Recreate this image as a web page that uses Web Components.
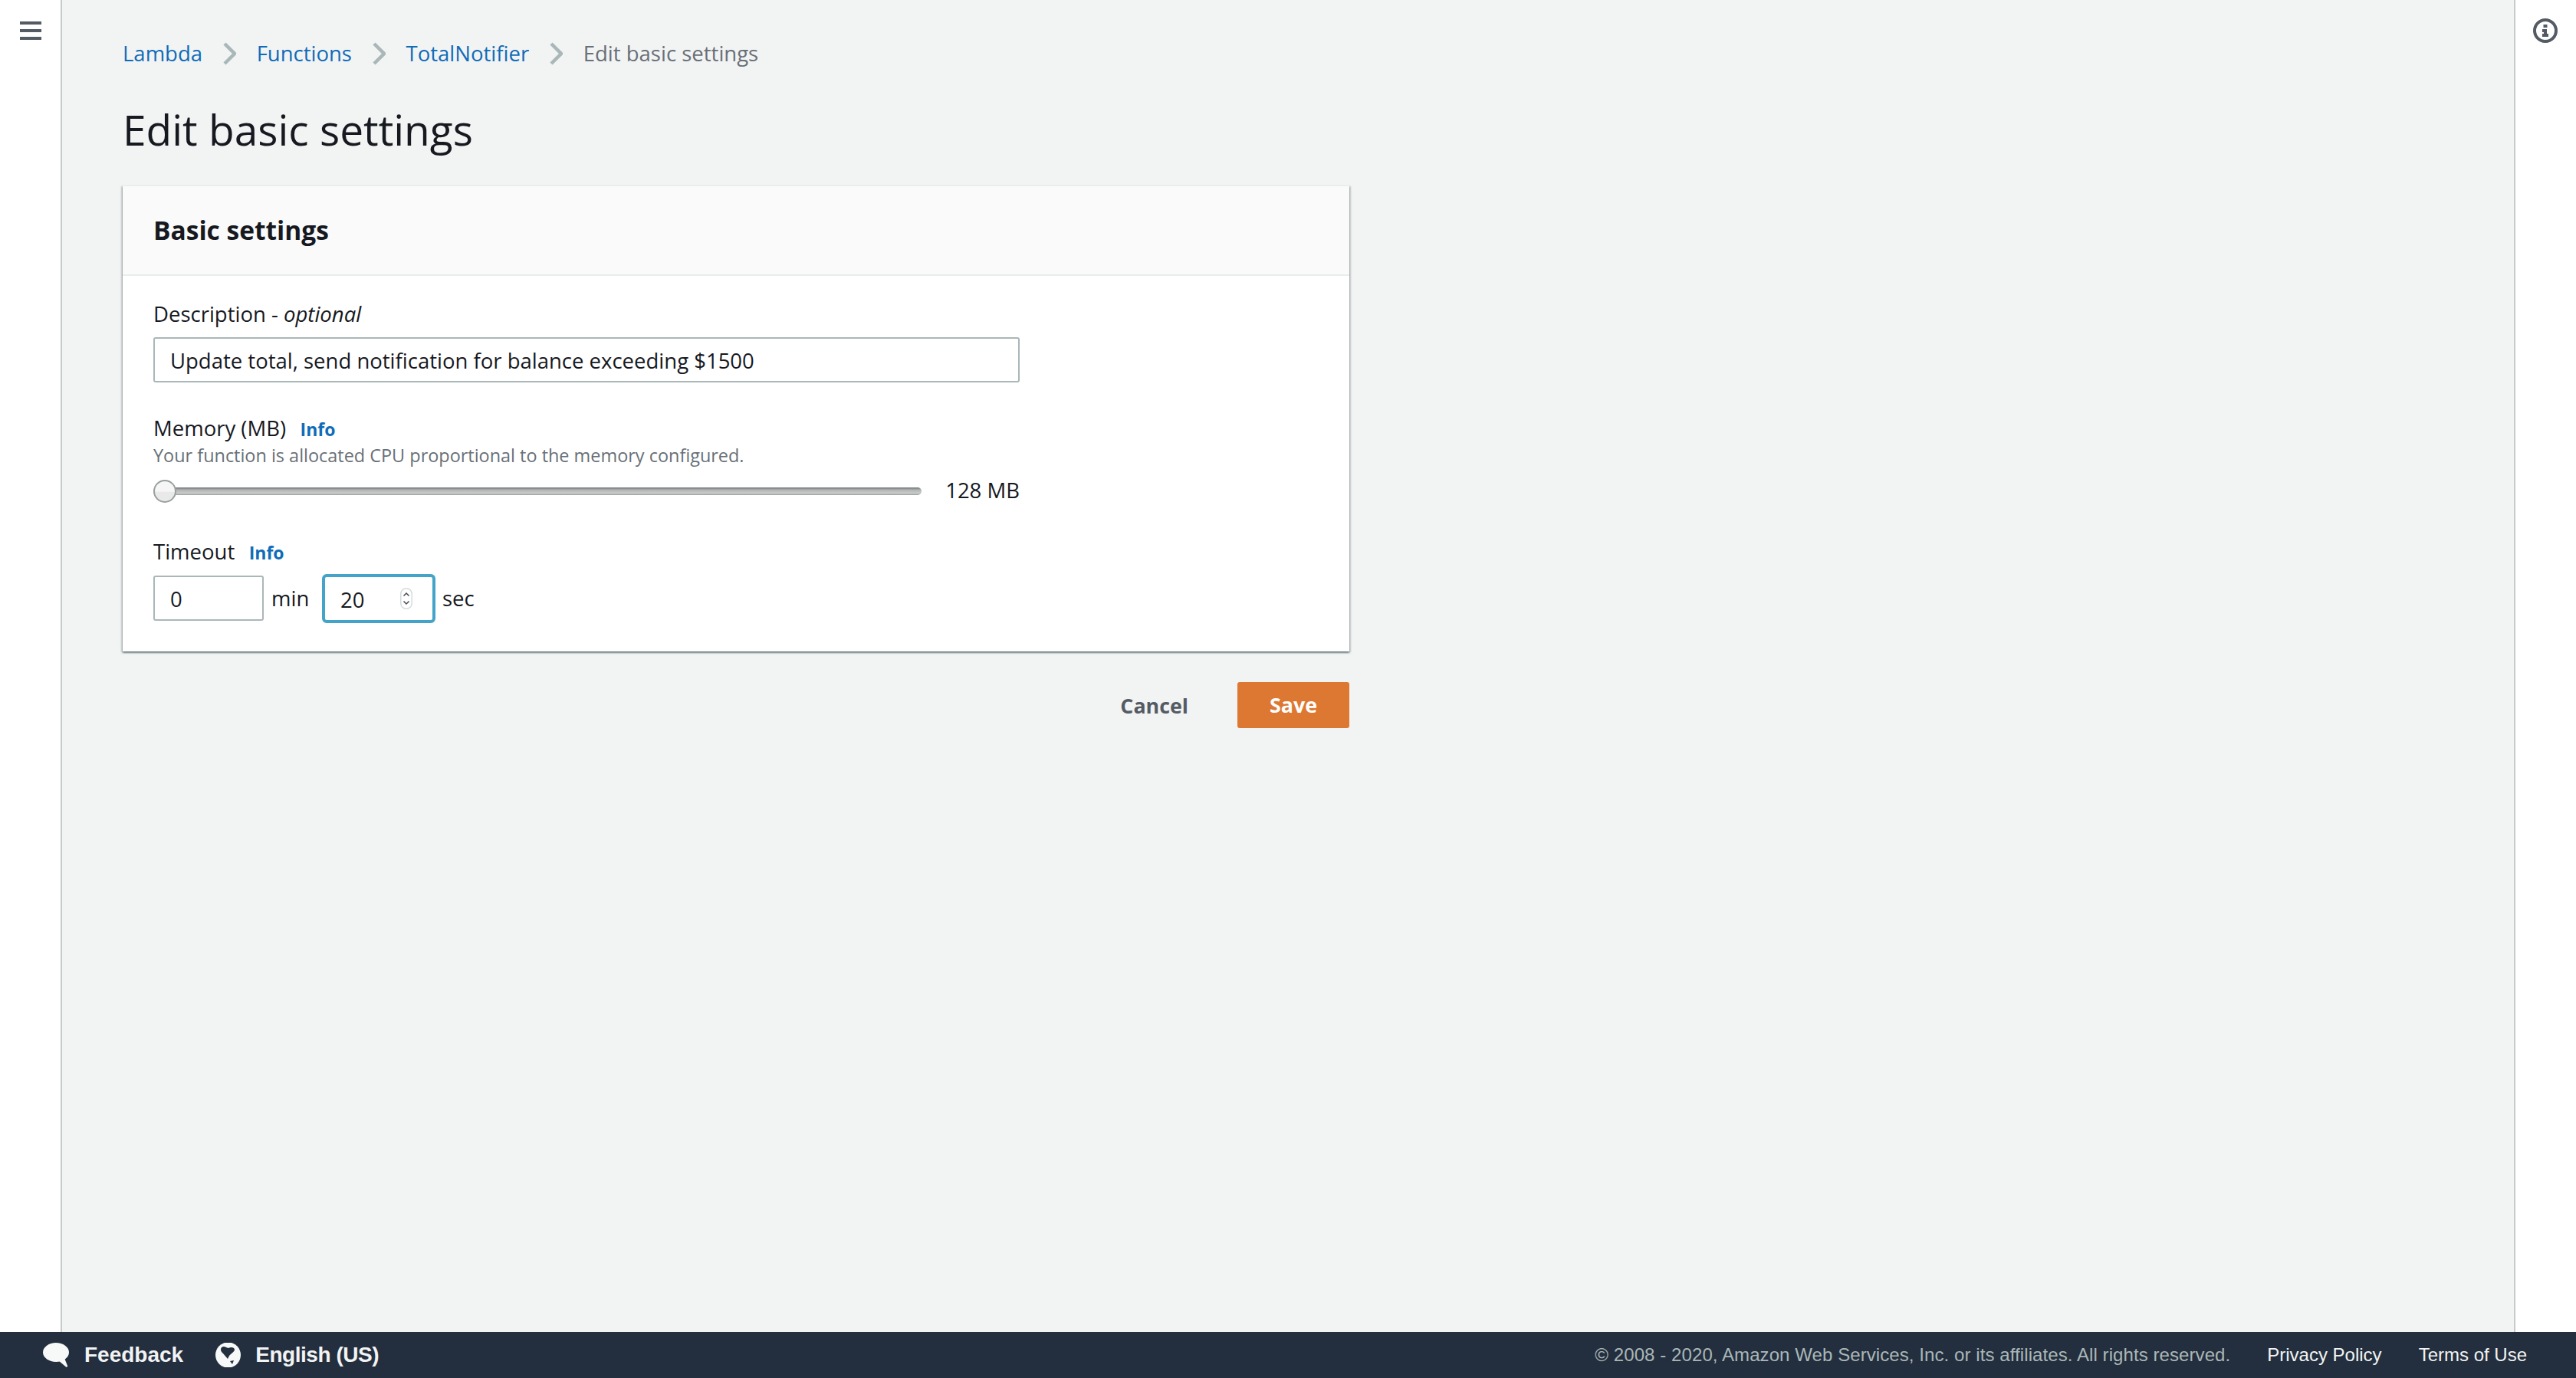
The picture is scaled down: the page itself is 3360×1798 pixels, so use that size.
<!doctype html>
<html>
<head>
<meta charset="utf-8">
<title>Edit basic settings</title>
<style>
  html, body { margin: 0; height: 100%; }
  body { font-family: "Open Sans", "Liberation Sans", sans-serif; color: #16191f; }
</style>
</head>
<body>
<aws-shell>
  <aws-breadcrumbs>
    <a>Lambda</a><a>Functions</a><a>TotalNotifier</a><span>Edit basic settings</span>
  </aws-breadcrumbs>
  <aws-title>Edit basic settings</aws-title>
  <aws-card heading="Basic settings">
    <aws-field>
      <span slot="label">Description - <i>optional</i></span>
      <aws-text-box wide value="Update total, send notification for balance exceeding $1500"></aws-text-box>
    </aws-field>
    <aws-field info hint="Your function is allocated CPU proportional to the memory configured.">
      <span slot="label">Memory (MB)</span>
      <aws-slider value="128 MB"></aws-slider>
    </aws-field>
    <aws-field info last>
      <span slot="label">Timeout</span>
      <aws-time-input></aws-time-input>
    </aws-field>
  </aws-card>
  <aws-actions></aws-actions>
</aws-shell>
<script>
// small helper, every element below is just a template plus a shadow root
function shadowOf(el, html) {
  const root = el.attachShadow({ mode: 'open' })
  root.innerHTML = html
  return root
}

class AwsShell extends HTMLElement {
  constructor() {
    super()
    shadowOf(this, `
      <style>
        :host { display: grid; grid-template-columns: 81px 1fr 81px; grid-template-rows: 1738px 60px; height: 1798px; background: #fff; overflow: hidden; }
        .rail { background: #fff; position: relative; z-index: 1; }
        .rail.left { border-right: 2px solid #c6caca; box-sizing: border-box; padding: 28px 0 0 26px; }
        .rail.right { border-left: 2px solid #c6caca; box-sizing: border-box; padding: 24px 0 0 23px; }
        svg { display: block; }
        main { background: #f2f3f3; padding: 0 79px; min-width: 0; }
        footer { grid-column: 1 / -1; background: #232f3e; display: flex; align-items: center; padding: 0 64px 0 56px; font: 24px/60px "Liberation Sans", sans-serif; color: #f2f3f3; }
        .item { display: flex; align-items: center; font-weight: 700; font-size: 28px; margin-right: 42px; }
        .item svg { margin-right: 20px; }
        .item.lang svg { margin-right: 19px; }
        .item.lang { letter-spacing: -.45px; }
        .grow { flex: 1; }
        .copy { color: #aab7b8; letter-spacing: .08px; }
        .link { margin-left: 48px; }
      </style>
      <div class="rail left">
        <svg width="28" height="24" viewBox="0 0 28 24" fill="#545b64"><rect width="28" height="4"/><rect y="10" width="28" height="4"/><rect y="20" width="28" height="4"/></svg>
      </div>
      <main><slot></slot></main>
      <div class="rail right">
        <svg width="32" height="32" viewBox="0 0 32 32"><circle cx="16" cy="16" r="14" fill="none" stroke="#545b64" stroke-width="4"/><rect x="13.5" y="8" width="5" height="4" fill="#545b64"/><path d="M12 14h6v6h2v4h-8v-4h2v-2h-2z" fill="#545b64"/></svg>
      </div>
      <footer>
        <span class="item">
          <svg width="34" height="32" viewBox="0 0 34 32" fill="#f7f8f8"><ellipse cx="17" cy="12.5" rx="17" ry="12.5"/><path d="M20 23l10 8.500c1 .6 2.500 0 2-1.500L28 20z"/></svg>
          Feedback
        </span>
        <span class="item lang">
          <svg width="33" height="32" viewBox="0 0 33 32"><circle cx="16.500" cy="16" r="16.500" fill="#f7f8f8"/><path d="M7 9C7 5 11 4 14 6l3 1c3-2 8-1 8 2 0 3-5 5-7 8l-2 4c-2-2-4-5-6-7-2-2-3-3-3-5zM19 24l5-1-2 5z" fill="#232f3e"/></svg>
          English (US)
        </span>
        <span class="grow"></span>
        <span class="copy">© 2008 - 2020, Amazon Web Services, Inc. or its affiliates. All rights reserved.</span>
        <span class="link">Privacy Policy</span>
        <span class="link">Terms of Use</span>
      </footer>`)
  }
}
customElements.define('aws-shell', AwsShell)

class AwsBreadcrumbs extends HTMLElement {
  constructor() {
    super()
    const root = shadowOf(this, `
      <style>
        :host { display: block; padding-top: 50px; font-size: 27.5px; line-height: 40px; height: 40px; color: #687078; }
        nav { display: flex; align-items: center; }
        a { color: #0f6cb8; }
        svg { display: block; margin: 0 26.8px; }
      </style>
      <nav></nav>`)
    const nav = root.querySelector('nav')
    const items = [...this.children]
    items.forEach((item, i) => {
      const el = document.createElement(item.tagName === 'A' ? 'a' : 'span')
      el.textContent = item.textContent
      nav.appendChild(el)
      if (i < items.length - 1) {
        const sep = document.createElement('template')
        sep.innerHTML = '<svg width="17" height="30" viewBox="0 0 17 30"><path d="M2 2l13 13L2 28" fill="none" stroke="#aab7b8" stroke-width="4.500"/></svg>'
        nav.appendChild(sep.content)
      }
    })
  }
}
customElements.define('aws-breadcrumbs', AwsBreadcrumbs)

class AwsTitle extends HTMLElement {
  constructor() {
    super()
    shadowOf(this, `
      <style>
        :host { display: block; font-size: 55px; line-height: 64px; margin-top: 47px; margin-bottom: 41px; color: #16191f; }
      </style>
      <slot></slot>`)
  }
}
customElements.define('aws-title', AwsTitle)

class AwsCard extends HTMLElement {
  constructor() {
    super()
    const root = shadowOf(this, `
      <style>
        :host { display: block; width: 1600px; background: #fff; box-shadow: 0 2px 2px 0 rgba(0,28,36,.45), 2px 1px 2px 0 rgba(0,28,36,.18), -2px 1px 2px 0 rgba(0,28,36,.18); }
        header { height: 115px; background: #fafafa; border-bottom: 2px solid #eaeded; border-top: 1px solid #eaeded; padding: 0 40px; font-size: 33.5px; font-weight: 700; line-height: 115px; color: #16191f; }
        .body { padding: 30px 40px 40px; }
      </style>
      <header></header>
      <div class="body"><slot></slot></div>`)
    root.querySelector('header').textContent = this.getAttribute('heading')
  }
}
customElements.define('aws-card', AwsCard)

class AwsField extends HTMLElement {
  constructor() {
    super()
    const hint = this.getAttribute('hint')
    shadowOf(this, `
      <style>
        :host { display: block; margin-bottom: 40px; }
        :host([last]) { margin-bottom: 0; }
        .label { display: flex; align-items: baseline; font-size: 27.5px; line-height: 40px; color: #16191f; }
        .info { font-size: 23px; font-weight: 700; color: #0f6cb8; margin-left: 18.5px; }
        .hint { font-size: 23.45px; line-height: 32px; margin-top: -2px; color: #687078; }
        .control { margin-top: 10px; }
        .hint + .control { margin-top: 17px; }
      </style>
      <div class="label"><slot name="label"></slot>${this.hasAttribute('info') ? '<span class="info">Info</span>' : ''}</div>
      ${hint ? `<div class="hint">${hint}</div>` : ''}
      <div class="control"><slot></slot></div>`)
  }
}
customElements.define('aws-field', AwsField)

class AwsTextBox extends HTMLElement {
  constructor() {
    super()
    const root = shadowOf(this, `
      <style>
        :host { display: block; flex: none; box-sizing: border-box; width: 144px; height: 59px; background: #fff; border: 2px solid #aab7b8; border-radius: 3px; padding: 0 20px; font-size: 27.5px; line-height: 58px; color: #16191f; position: relative; }
        :host([wide]) { width: 1130px; margin-top: 1px; }
        :host([focused]) { width: 148px; height: 64px; border: 4px solid #44a3c8; border-radius: 6px; padding: 0 20px; line-height: 59px; }
        svg { position: absolute; right: 26px; top: 14px; }
      </style>
      <span></span>
      ${this.hasAttribute('focused') ? `<svg width="16" height="28" viewBox="0 0 16 28"><rect x=".75" y=".75" width="14.5" height="26.5" rx="7" fill="#fff" stroke="#d5dbdb" stroke-width="1.5"/><path d="M4.5 10.5L8 7l3.5 3.5M4.5 17.5L8 21l3.5-3.5" fill="none" stroke="#444b54" stroke-width="1.5"/></svg>` : ''}`)
    root.querySelector('span').textContent = this.getAttribute('value')
  }
}
customElements.define('aws-text-box', AwsTextBox)

class AwsSlider extends HTMLElement {
  constructor() {
    super()
    const root = shadowOf(this, `
      <style>
        :host { display: flex; align-items: center; width: 1130px; height: 28px; padding-bottom: 5px; font-size: 27.5px; line-height: 28px; color: #16191f; }
        .track { position: relative; width: 1002px; height: 10px; border-radius: 5px; background: linear-gradient(#6f7476, #b4b6b6 35%, #c9cbcb 75%, #9a9d9d); }
        .thumb { position: absolute; left: 0; top: -10px; box-sizing: border-box; width: 30px; height: 30px; border-radius: 50%; background: linear-gradient(#f6f6f6 50%, #e9e9e9 55%); border: 2.5px solid #9a9f9f; }
        .value { margin-left: auto; padding-bottom: 3px; }
      </style>
      <div class="track"><div class="thumb"></div></div>
      <span class="value"></span>`)
    root.querySelector('.value').textContent = this.getAttribute('value')
  }
}
customElements.define('aws-slider', AwsSlider)

class AwsTimeInput extends HTMLElement {
  constructor() {
    super()
    shadowOf(this, `
      <style>
        :host { display: flex; align-items: center; height: 59px; font-size: 27.5px; color: #16191f; }
        .unit { box-sizing: border-box; width: 76px; padding-left: 10px; }
        .unit.last { padding-left: 9px; }
      </style>
      <aws-text-box value="0"></aws-text-box>
      <span class="unit">min</span>
      <aws-text-box value="20" focused></aws-text-box>
      <span class="unit last">sec</span>`)
  }
}
customElements.define('aws-time-input', AwsTimeInput)

class AwsActions extends HTMLElement {
  constructor() {
    super()
    shadowOf(this, `
      <style>
        :host { display: flex; justify-content: flex-end; align-items: center; width: 1600px; margin-top: 40px; font-size: 26.8px; font-weight: 700; }
        .cancel { color: #545b64; margin-right: 64px; }
        .save { width: 146px; height: 60px; line-height: 60px; text-align: center; border-radius: 3px; background: #dd7833; color: #fff; }
      </style>
      <span class="cancel">Cancel</span>
      <span class="save">Save</span>`)
  }
}
customElements.define('aws-actions', AwsActions)
</script>
</body>
</html>
